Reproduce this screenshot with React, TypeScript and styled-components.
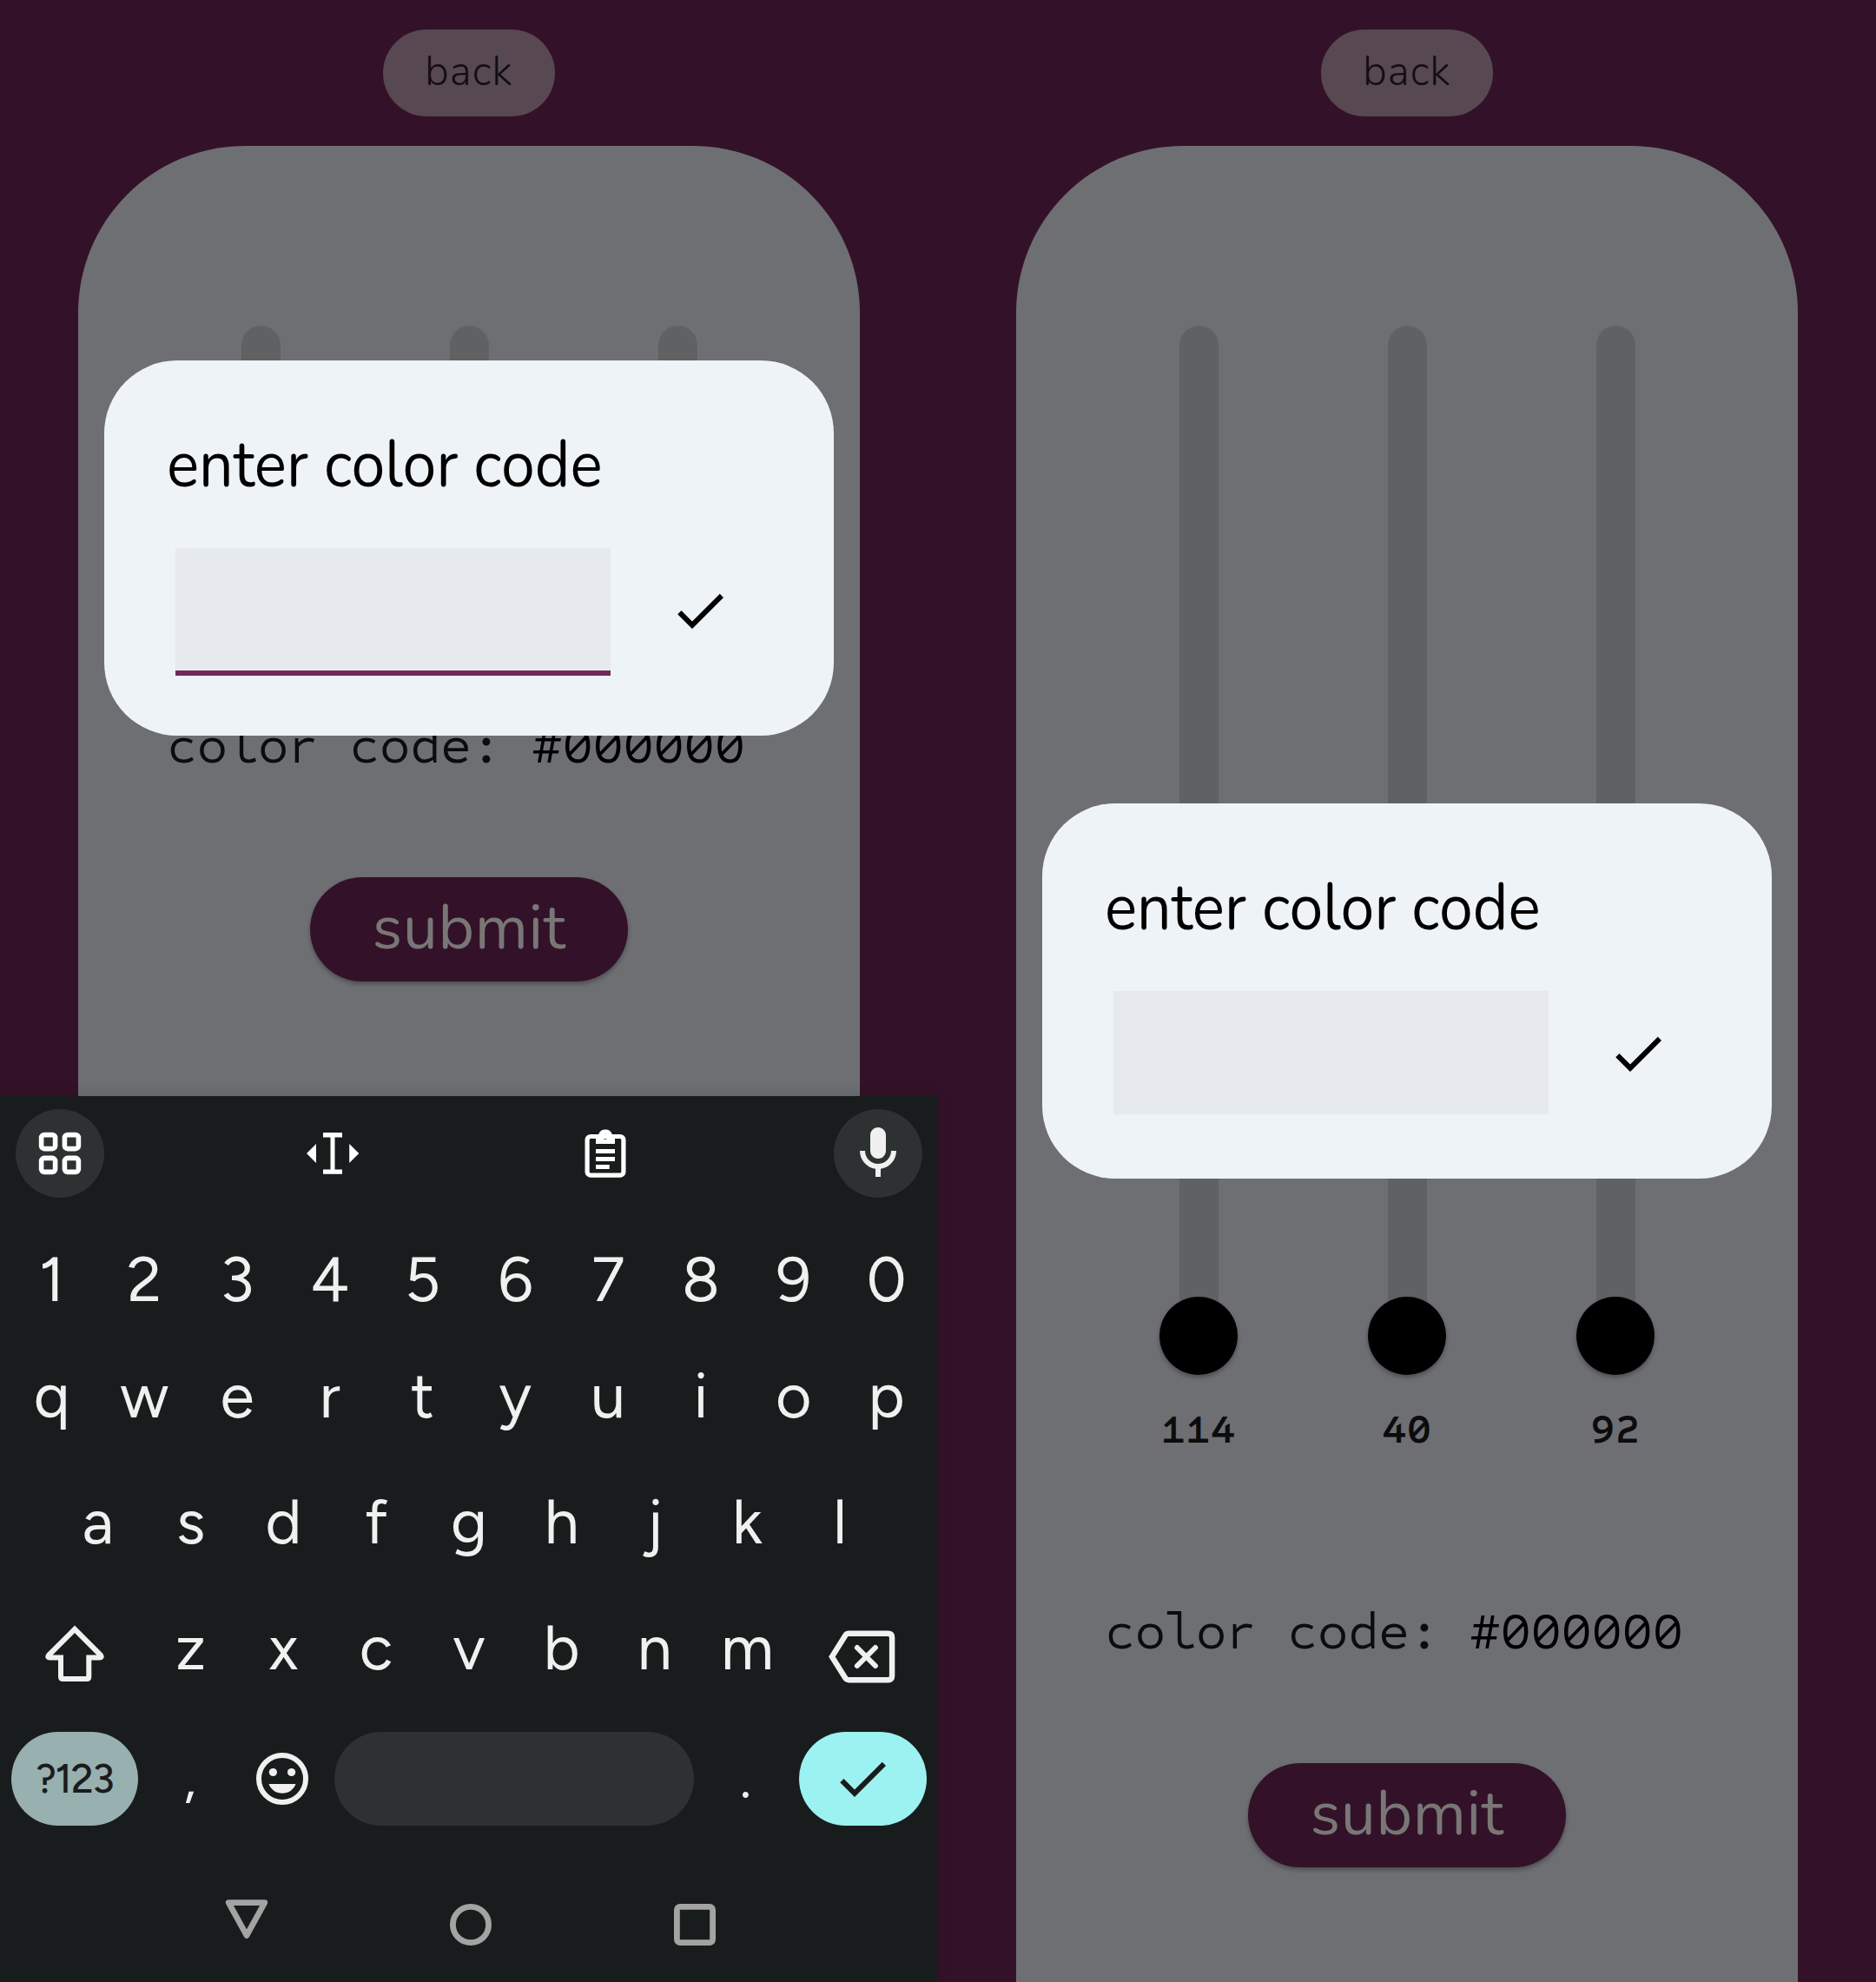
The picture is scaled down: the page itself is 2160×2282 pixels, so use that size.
import React from 'react';
import styled, { createGlobalStyle } from 'styled-components';

const ink = '#191c1d';
const sans = "'Nunito', 'Open Sans', 'Noto Sans', sans-serif";
const mono = "'Sometype Mono', 'Noto Sans Mono', 'DejaVu Sans Mono', monospace";
const keyFont = "'Figtree', 'Inter', 'Roboto', sans-serif";

const GlobalStyle = createGlobalStyle`
  *, *::before, *::after { box-sizing: border-box; }
  body { margin: 0; background: #331229; }
  button { border: 0; padding: 0; margin: 0; font: inherit; color: inherit; background: none; }
  svg { display: block; }
`;

const Board = styled.main`
  display: grid;
  grid-template-columns: 1080px 1080px;
  height: 2282px;
  overflow: hidden;
`;

const Phone = styled.section`
  display: flex;
  flex-direction: column;
  height: 2282px;
  background: #331229;
`;

const Content = styled.div`
  position: relative;
  flex: 1;
  min-height: 0;
  display: flex;
  flex-direction: column;
  align-items: center;
  padding-top: 34px;
  overflow: hidden;
`;

const BackButton = styled.button`
  width: 198px;
  height: 100px;
  padding-bottom: 2px;
  border-radius: 50px;
  background: #584851;
  color: #130d12;
  font: 300 47.5px/96px ${sans};
  letter-spacing: 1.1px;
`;

const Panel = styled.div`
  flex: 1;
  min-height: 0;
  width: 900px;
  margin-top: 34px;
  padding: 207px 0 132px;
  display: flex;
  flex-direction: column;
  align-items: center;
  border-radius: 192px 192px 0 0;
  background: #6e6f73;
`;

const Sliders = styled.div`
  flex: 1;
  min-height: 0;
  display: flex;
  gap: 150px;
`;

const Slider = styled.div`
  width: 90px;
  display: flex;
  flex-direction: column;
  align-items: center;
`;

const Track = styled.div`
  flex: 1;
  width: 45px;
  border-radius: 22.5px 22.5px 0 0;
  background: #606162;
`;

const Thumb = styled.div`
  width: 90px;
  height: 90px;
  margin-top: -45px;
  border-radius: 50%;
  background: #000;
  box-shadow: 0 3px 5px rgba(0, 0, 0, 0.3);
`;

const Value = styled.div`
  margin-top: 33px;
  font: 600 48px/60px ${mono};
  font-feature-settings: 'zero';
  letter-spacing: 0.6px;
  color: #0b0c0d;
`;

const CodeLine = styled.div`
  align-self: flex-start;
  margin: 173px 0 121px 102px;
  font: 400 60px/60px ${mono};
  font-feature-settings: 'zero';
  letter-spacing: 0.25px;
  white-space: pre;
  color: #0b0c0d;
`;

const CodeValue = styled.span`
  color: #000;
`;

const SubmitButton = styled.button`
  flex: none;
  width: 366px;
  height: 120px;
  padding-bottom: 3px;
  border-radius: 60px;
  background: #331229;
  color: #787776;
  font: 400 71.5px/114px ${sans};
  letter-spacing: 0.6px;
  box-shadow: 0 3px 5px rgba(0, 0, 0, 0.3);
`;

const Overlay = styled.div`
  position: absolute;
  inset: 0;
  display: flex;
  align-items: center;
  justify-content: center;
`;

const Dialog = styled.div`
  width: 840px;
  height: 432px;
  padding: 70px 70px 0 72px;
  border-radius: 84px;
  background: #eef3f7;
`;

const DialogTitle = styled.h1`
  width: max-content;
  margin: 0;
  font: 410 76px/100px ${sans};
  color: #000;
  transform: scaleX(0.918);
  transform-origin: left;
`;

const DialogRow = styled.div`
  display: flex;
  align-items: flex-start;
  margin: 46px 0 0 10px;
`;

const Field = styled.div<{ $focused: boolean }>`
  width: 501px;
  height: ${(p) => (p.$focused ? 147 : 142)}px;
  background: #e6e9ee;
  border-bottom: ${(p) => (p.$focused ? '6px solid #72285c' : '0')};
`;

const ConfirmButton = styled.button`
  margin: 36px 0 0 67px;
`;

const KeyboardRoot = styled.div`
  height: 1020px;
  display: flex;
  flex-direction: column;
  position: relative;
  background: ${ink};
  color: #eff0ef;
  box-shadow: 0 -2px 14px rgba(0, 0, 0, 0.12);
`;

const Toolbar = styled.div`
  height: 132px;
  margin-bottom: 13px;
  padding: 0 18px;
  display: flex;
  align-items: center;
  justify-content: space-between;
`;

const ToolButton = styled.button<{ $filled?: boolean }>`
  width: 102px;
  height: 102px;
  display: flex;
  align-items: center;
  justify-content: center;
  border-radius: 50%;
  color: #fff;
  background: ${(p) => (p.$filled ? '#2d3132' : 'transparent')};
`;

const KeyRow = styled.div<{ $height: number; $top?: number }>`
  display: flex;
  justify-content: center;
  align-items: center;
  height: ${(p) => p.$height}px;
  margin-top: ${(p) => p.$top ?? 0}px;
`;

const Key = styled.button<{ $wide?: boolean }>`
  width: ${(p) => (p.$wide ? 160.2 : 106.8)}px;
  height: 100%;
  display: flex;
  align-items: center;
  justify-content: center;
  font: 450 71.5px/1 ${keyFont};
`;

const Punctuation = styled(Key)`
  font-size: 62px;
`;

const BottomRow = styled.div`
  display: flex;
  align-items: center;
  height: 146px;
  margin-top: 5px;
  padding-left: 13px;
`;

const SymbolsKey = styled.button`
  width: 146px;
  height: 108px;
  margin-right: 6px;
  border-radius: 54px;
  background: #98b0af;
  color: ${ink};
  font: 530 46px/107px ${keyFont};
  letter-spacing: -1.1px;
`;

const SpaceKey = styled.button`
  width: 414px;
  height: 108px;
  margin: 0 6px 0 6.4px;
  border-radius: 54px;
  background: #2d3132;
`;

const EnterKey = styled.button`
  width: 147px;
  height: 108px;
  margin-left: 8px;
  display: flex;
  align-items: center;
  justify-content: center;
  border-radius: 54px;
  background: #9cf2f0;
  color: ${ink};
`;

const NavBar = styled.nav`
  display: flex;
  gap: 186px;
  padding: 59px 0 0 248px;
  color: #a3a3a3;
`;

const CheckIcon = () => (
  <svg width="72" height="72" viewBox="0 0 24 24" fill="currentColor">
    <path d="M9 16.17 4.83 12l-1.42 1.41L9 19 21 7l-1.41-1.41z" />
  </svg>
);

const GridIcon = () => (
  <svg width="72" height="72" viewBox="0 0 72 72" fill="none" stroke="currentColor" strokeWidth="5.6">
    <rect x="14.6" y="14.6" width="16" height="16" rx="3.4" />
    <rect x="41.4" y="14.6" width="16" height="16" rx="3.4" />
    <rect x="14.6" y="41.4" width="16" height="16" rx="3.4" />
    <rect x="41.4" y="41.4" width="16" height="16" rx="3.4" />
  </svg>
);

const CursorIcon = () => (
  <svg width="72" height="72" viewBox="0 0 72 72" fill="currentColor">
    <path d="M25 12H47V17.5H38.5V54.5H47V59.8H25V54.5H33.5V17.5H25Z" />
    <path d="M6 36 17 25V47ZM66.3 36 55.2 25V47Z" />
  </svg>
);

const ClipboardIcon = () => (
  <svg width="72" height="72" viewBox="0 0 72 72" fill="currentColor">
    <rect x="15.1" y="16.5" width="41.8" height="44.7" rx="4" fill="none" stroke="currentColor" strokeWidth="5.2" />
    <path
      fillRule="evenodd"
      d="M25 14H28.2A8.3 8.3 0 0 1 43.8 14H47V25H25ZM36 13.7A3 3 0 1 0 36 19.7 3 3 0 1 0 36 13.7Z"
    />
    <path d="M25 31H47V36H25ZM25 40H47V45H25ZM25 49H40.7V54H25Z" />
  </svg>
);

const MicIcon = () => (
  <svg width="72" height="72" viewBox="0 0 24 24" fill="#eff0ef">
    <path d="M12 14c1.66 0 3-1.34 3-3V5c0-1.66-1.34-3-3-3S9 3.34 9 5v6c0 1.66 1.34 3 3 3z" />
    <path d="M17 11c0 2.76-2.24 5-5 5s-5-2.24-5-5H5c0 3.53 2.61 6.43 6 6.92V21h2v-3.08c3.39-.49 6-3.39 6-6.92h-2z" />
  </svg>
);

const ShiftIcon = () => (
  <svg width="80" height="80" viewBox="0 0 80 80" fill="none" stroke="currentColor" strokeWidth="6">
    <path d="M40 17.8 10 47.8Q8 50.5 11.5 50.5H24V72.5q0 2.5 2.5 2.5H53.8q2.5 0 2.5-2.5V50.5H68.5Q72 50.5 70 47.8Z" />
  </svg>
);

const BackspaceIcon = () => (
  <svg width="80" height="80" viewBox="0 0 80 80" fill="none" stroke="currentColor" strokeWidth="6.4">
    <path d="M23.4 22.7H68.4q4.7 0 4.7 4.7V71.5q0 4.7-4.7 4.7H23.4q-2.5 0-4-2L3.9 49.5 19.4 24.7q1.5-2 4-2Z" />
    <path d="M32.9 39 53.9 60M53.9 39 32.9 60" strokeLinecap="round" strokeWidth="6" />
  </svg>
);

const EmojiIcon = () => (
  <svg width="60" height="60" viewBox="-30 -30 60 60" fill="currentColor">
    <circle r="27" fill="none" stroke="currentColor" strokeWidth="6" />
    <circle cx="-10.6" cy="-7.5" r="4.6" />
    <circle cx="10.6" cy="-7.5" r="4.6" />
    <path d="M-15.5 6H15.5C13 12.7 7 16.8 0 16.8S-13 12.7-15.5 6Z" />
  </svg>
);

const NavIcon = ({ children }: { children: React.ReactNode }) => (
  <svg width="72" height="72" viewBox="0 0 72 72" fill="none" stroke="currentColor" strokeWidth="6.8" strokeLinejoin="round">
    {children}
  </svg>
);

const Keys = ({ keys }: { keys: string }) => (
  <>
    {keys.split('').map((k) => (
      <Key key={k}>{k}</Key>
    ))}
  </>
);

const Keyboard = () => (
  <KeyboardRoot>
    <Toolbar>
      <ToolButton $filled><GridIcon /></ToolButton>
      <ToolButton><CursorIcon /></ToolButton>
      <ToolButton><ClipboardIcon /></ToolButton>
      <ToolButton $filled><MicIcon /></ToolButton>
    </Toolbar>
    <KeyRow $height={134}><Keys keys="1234567890" /></KeyRow>
    <KeyRow $height={134}><Keys keys="qwertyuiop" /></KeyRow>
    <KeyRow $height={145} $top={5}><Keys keys="asdfghjkl" /></KeyRow>
    <KeyRow $height={145}>
      <Key $wide><ShiftIcon /></Key>
      <Keys keys="zxcvbnm" />
      <Key $wide><BackspaceIcon /></Key>
    </KeyRow>
    <BottomRow>
      <SymbolsKey>?123</SymbolsKey>
      <Punctuation>,</Punctuation>
      <Key><EmojiIcon /></Key>
      <SpaceKey />
      <Punctuation>.</Punctuation>
      <EnterKey><CheckIcon /></EnterKey>
    </BottomRow>
    <NavBar>
      <NavIcon><path d="M15.2 10.6H56.8L36 48.4Z" /></NavIcon>
      <NavIcon><circle cx="36" cy="36" r="20.6" /></NavIcon>
      <NavIcon><rect x="15.4" y="15.4" width="41.2" height="41.2" rx="3.5" /></NavIcon>
    </NavBar>
  </KeyboardRoot>
);

const channels = [114, 40, 92];

const ColorScreen = ({ keyboard }: { keyboard: boolean }) => (
  <Phone>
    <Content>
      <BackButton>back</BackButton>
      <Panel>
        <Sliders>
          {channels.map((value) => (
            <Slider key={value}>
              <Track />
              <Thumb />
              <Value>{value}</Value>
            </Slider>
          ))}
        </Sliders>
        <CodeLine>
          color code: <CodeValue>#000000</CodeValue>
        </CodeLine>
        <SubmitButton>submit</SubmitButton>
      </Panel>
      <Overlay>
        <Dialog>
          <DialogTitle>enter color code</DialogTitle>
          <DialogRow>
            <Field $focused={keyboard} />
            <ConfirmButton><CheckIcon /></ConfirmButton>
          </DialogRow>
        </Dialog>
      </Overlay>
    </Content>
    {keyboard && <Keyboard />}
  </Phone>
);

const App = () => (
  <Board>
    <GlobalStyle />
    <ColorScreen keyboard />
    <ColorScreen keyboard={false} />
  </Board>
);

export default App;
